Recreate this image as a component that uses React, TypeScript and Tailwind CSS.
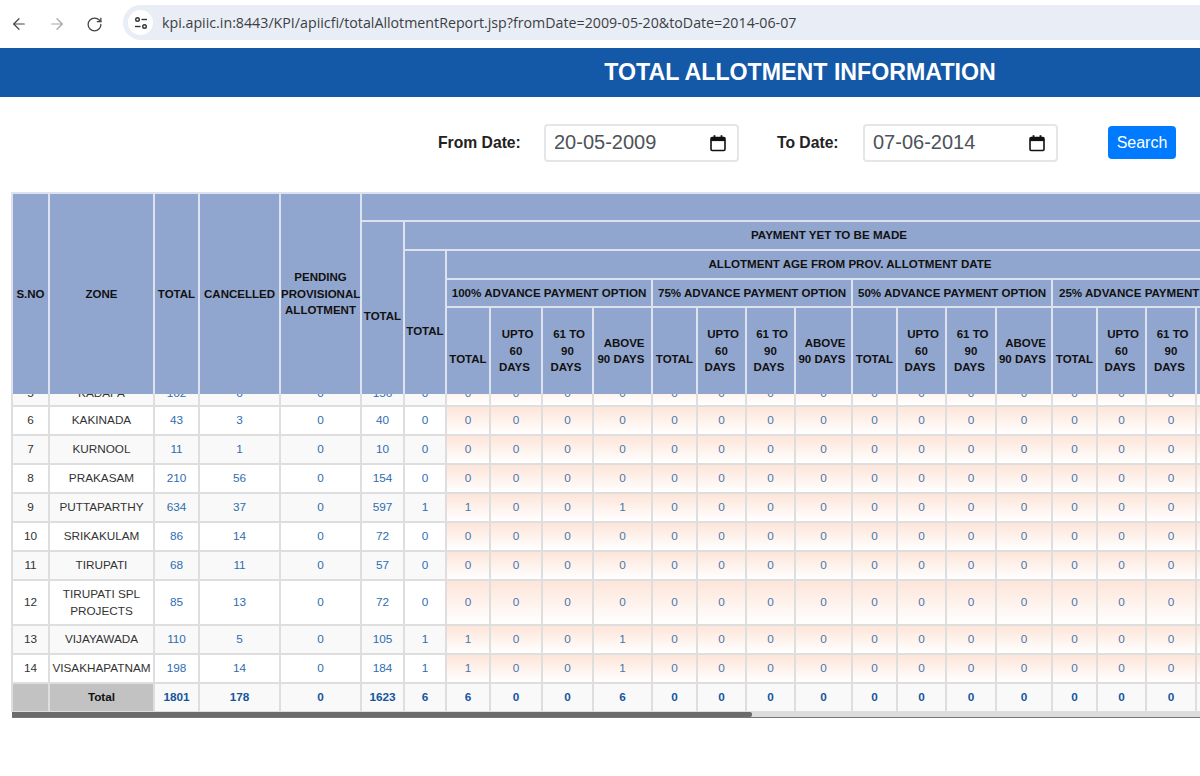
import { ArrowLeft, ArrowRight, RotateCw } from 'lucide-react';

const colWidths = [37, 105, 45, 81, 81, 43, 42, 44, 52, 51, 59, 45, 49, 49, 57, 45, 49, 50, 56, 45, 49, 50, 58];

const th = "border-2 border-[#dde2ee] bg-[#91a6cf] text-center align-middle font-bold text-[11.5px] leading-[16.5px] text-[#111] p-0";
const thSub = "border-2 border-[#dde2ee] bg-[#91a6cf] text-center align-middle font-bold text-[11.6px] leading-[16.5px] text-[#111] p-0 whitespace-nowrap";
const td = "border-2 border-[#dedede] text-center align-middle text-[11.75px] leading-[16.5px] p-0";
const num = "text-[#2f6db0]";
const ageCell = "bg-linear-to-b from-[#fde5d9] to-white text-[#4a76ab]";

type Row = { sno: number; zone: string; vals: number[]; age?: boolean; tall?: boolean };

const rows: Row[] = [
  { sno: 5, zone: "KADAPA", vals: [162, 6, 0, 156, 0] },
  { sno: 6, zone: "KAKINADA", vals: [43, 3, 0, 40, 0] },
  { sno: 7, zone: "KURNOOL", vals: [11, 1, 0, 10, 0] },
  { sno: 8, zone: "PRAKASAM", vals: [210, 56, 0, 154, 0] },
  { sno: 9, zone: "PUTTAPARTHY", vals: [634, 37, 0, 597, 1], age: true },
  { sno: 10, zone: "SRIKAKULAM", vals: [86, 14, 0, 72, 0] },
  { sno: 11, zone: "TIRUPATI", vals: [68, 11, 0, 57, 0] },
  { sno: 12, zone: "TIRUPATI SPL PROJECTS", vals: [85, 13, 0, 72, 0], tall: true },
  { sno: 13, zone: "VIJAYAWADA", vals: [110, 5, 0, 105, 1], age: true },
  { sno: 14, zone: "VISAKHAPATNAM", vals: [198, 14, 0, 184, 1], age: true },
];

const Cols = () => (
  <colgroup>
    {colWidths.map((w, i) => (
      <col key={i} style={{ width: w }} />
    ))}
  </colgroup>
);

const AgeHeaders = () => (
  <>
    <th className={th}><br />TOTAL</th>
    <th className={th}>&nbsp;UPTO<br />60<br />DAYS&nbsp;</th>
    <th className={th}>&nbsp;61 TO<br />90<br />DAYS&nbsp;</th>
    <th className={th}>&nbsp;ABOVE<br />90 DAYS&nbsp;</th>
  </>
);

const CalendarIcon = () => (
  <svg width="18" height="18" viewBox="0 0 18 18" fill="none">
    <rect x="2" y="3.5" width="14" height="13" rx="1.2" stroke="#111" strokeWidth="1.6" />
    <rect x="2" y="3.5" width="14" height="3.6" fill="#111" />
    <rect x="4.6" y="1.2" width="1.8" height="3" fill="#111" />
    <rect x="11.6" y="1.2" width="1.8" height="3" fill="#111" />
  </svg>
);

const DateField = ({ value, width }: { value: string; width: string }) => (
  <div className={`${width} h-[38px] flex items-center justify-between pl-[8px] pr-[10px] bg-white border-2 border-[#e4e6e8] rounded-[4px]`}>
    <span className="text-[20px] text-[#4d5358] -mt-[3px]">{value}</span>
    <CalendarIcon />
  </div>
);

export default function App() {
  return (
    <div className="w-[1200px] h-[776px] overflow-hidden bg-white font-['Liberation_Sans',sans-serif]">
      {/* browser bar */}
      <div className="h-[48px] flex items-center bg-white">
        <div className="w-[123px] flex items-center pl-[10px] gap-[20px]">
          <ArrowLeft size={18} strokeWidth={1.6} className="text-[#444]" />
          <ArrowRight size={18} strokeWidth={1.6} className="text-[#a5a5a5]" />
          <RotateCw size={17} strokeWidth={1.8} className="text-[#444]" />
        </div>
        <div className="flex-1 h-[35px] -mt-[3px] flex items-center bg-[#e9eef6] rounded-l-full pl-[5px]">
          <div className="w-[25px] h-[25px] rounded-full bg-white flex items-center justify-center">
            <svg width="16" height="16" viewBox="0 0 16 16" fill="none" stroke="#333" strokeWidth="1.4">
              <circle cx="4.5" cy="4.5" r="1.8" />
              <path d="M8.5 4.5H14" />
              <path d="M2 11.5H7.5" />
              <circle cx="11.5" cy="11.5" r="1.8" />
            </svg>
          </div>
          <span className="ml-[9px] text-[14.23px] text-[#3c4043] font-['Open_Sans',sans-serif] whitespace-nowrap">
            kpi.apiic.in:8443/KPI/apiicfi/totalAllotmentReport.jsp?fromDate=2009-05-20&toDate=2014-06-07
          </span>
        </div>
      </div>

      {/* title */}
      <div className="h-[49px] bg-[#1458a8] flex items-center justify-center pl-[400px]">
        <h1 className="text-[23.2px] font-bold text-white whitespace-nowrap">TOTAL ALLOTMENT INFORMATION</h1>
      </div>

      {/* filter */}
      <div className="h-[95px] pt-[27px] flex items-start pl-[438px]">
        <div className="h-[38px] flex items-center">
          <label className="w-[106px] text-[15.7px] font-bold text-[#222]">From Date:</label>
          <DateField value="20-05-2009" width="w-[195px]" />
          <label className="ml-[38px] w-[86px] text-[15.7px] font-bold text-[#222]">To Date:</label>
          <DateField value="07-06-2014" width="w-[195px]" />
          <button className="ml-[50px] -mt-[1px] w-[68px] h-[33px] bg-[#007bff] text-white text-[16px] rounded-[4px]">Search</button>
        </div>
      </div>

      {/* report table */}
      <div className="ml-[11px] w-[1189px] overflow-hidden">
        <table className="table-fixed border-collapse w-[1238px] [&_th]:border-b-0">
          <Cols />
          <thead>
            <tr className="h-[28px]">
              <th rowSpan={5} className={th}>S.NO</th>
              <th rowSpan={5} className={th}>ZONE</th>
              <th rowSpan={5} className={th}>TOTAL</th>
              <th rowSpan={5} className={th}>CANCELLED</th>
              <th rowSpan={5} className={th}>PENDING<br />PROVISIONAL<br />ALLOTMENT</th>
              <th colSpan={18} className={th}></th>
            </tr>
            <tr className="h-[29px]">
              <th rowSpan={4} className={th}><br />TOTAL</th>
              <th colSpan={17} className={thSub}>PAYMENT YET TO BE MADE</th>
            </tr>
            <tr className="h-[29px]">
              <th rowSpan={3} className={th}><br />TOTAL</th>
              <th colSpan={16} className={thSub}>ALLOTMENT AGE FROM PROV. ALLOTMENT DATE</th>
            </tr>
            <tr className="h-[28px]">
              <th colSpan={4} className={thSub}>100% ADVANCE PAYMENT OPTION</th>
              <th colSpan={4} className={thSub}>75% ADVANCE PAYMENT OPTION</th>
              <th colSpan={4} className={thSub}>50% ADVANCE PAYMENT OPTION</th>
              <th colSpan={4} className={thSub}>25% ADVANCE PAYMENT OPTION</th>
            </tr>
            <tr className="h-[87px]">
              <AgeHeaders />
              <AgeHeaders />
              <AgeHeaders />
              <AgeHeaders />
            </tr>
          </thead>
        </table>

        <div className="h-[318px] overflow-hidden">
          <table className="table-fixed border-collapse w-[1238px] -mt-[18px]">
            <Cols />
            <tbody>
              {rows.map((r, i) => (
                <tr key={r.sno} className={`${r.tall ? "h-[45px]" : "h-[29px]"} ${i % 2 === 0 ? "bg-[#f9f9f9]" : "bg-white"}`}>
                  <td className={`${td} text-[#333] ${i === 0 ? "pt-[4px]" : ""}`}>{r.sno}</td>
                  <td className={`${td} text-[#333] ${i === 0 ? "pt-[4px]" : ""}`}>{r.zone}</td>
                  {r.vals.map((v, j) => (
                    <td key={j} className={`${td} ${num} ${i === 0 ? "pt-[4px]" : ""}`}>{v}</td>
                  ))}
                  {Array.from({ length: 16 }).map((_, k) => (
                    <td key={k} className={`${td} ${ageCell} ${i === 0 ? "pt-[4px]" : ""}`}>{r.age && (k === 0 || k === 3) ? 1 : 0}</td>
                  ))}
                </tr>
              ))}
              <tr className="h-[29px] bg-[#f9f9f9]">
                <td className={`${td} !bg-[#c2c2c2]`}></td>
                <td className={`${td} !bg-[#c2c2c2] font-bold text-[#111]`}>Total</td>
                {[1801, 178, 0, 1623, 6, 6, 0, 0, 6, 0, 0, 0, 0, 0, 0, 0, 0, 0, 0, 0, 0].map((v, i) => (
                  <td key={i} className={`${td} font-bold text-[#14559f]`}>{v}</td>
                ))}
              </tr>
            </tbody>
          </table>
        </div>

        {/* horizontal scrollbar */}
        <div className="h-[6px] ml-[1px] bg-[#dcdcdc] border-b border-[#777]">
          <div className="w-[740px] h-full bg-[#6b6b6b] rounded-r-[2px]" />
        </div>
      </div>
    </div>
  );
}
